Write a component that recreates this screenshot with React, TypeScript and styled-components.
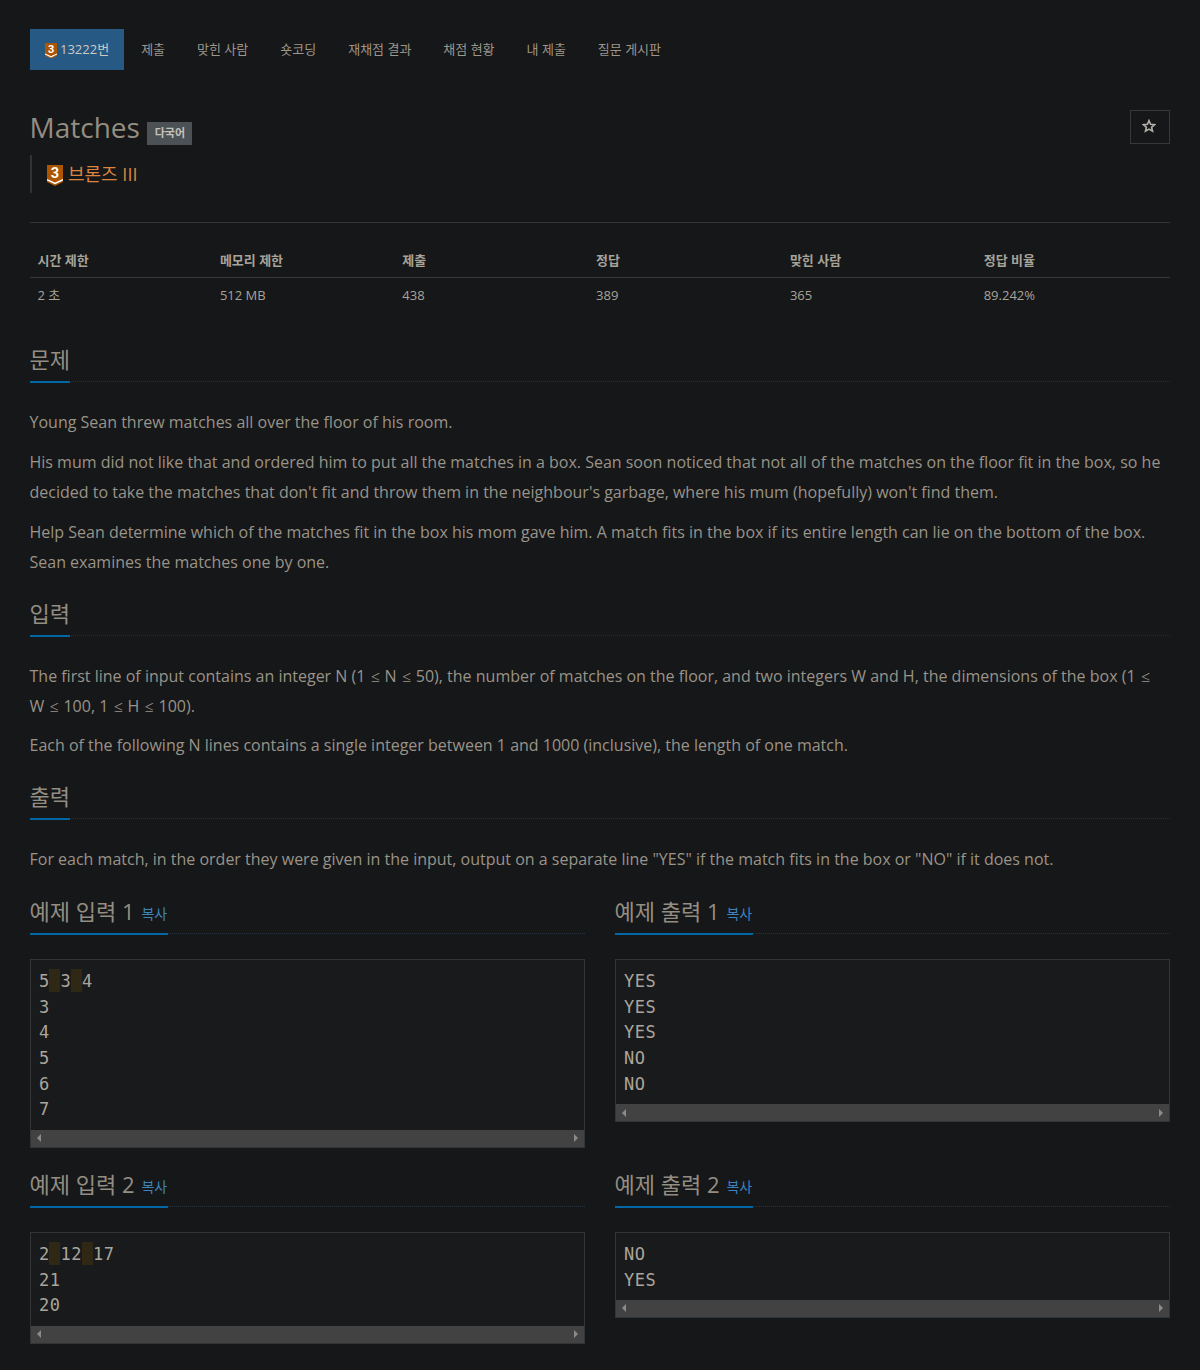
import React from "react";
import styled, { createGlobalStyle } from "styled-components";

const sans = `"Open Sans", "Noto Sans CJK KR", sans-serif`;
const mono = `"DejaVu Sans Mono", "Noto Sans CJK KR", monospace`;

const GlobalStyle = createGlobalStyle`
  * { box-sizing: border-box; }
  body {
    margin: 0;
    background: #151719;
    color: #a8a399;
    font-family: ${sans};
    font-size: 13px;
    line-height: 20px;
  }
`;

const Page = styled.main`
  padding: 29px 30.5px 0 29.5px;
  min-height: 1370px;
`;

const Nav = styled.nav`
  display: flex;
  gap: 2px;
  margin-left: 0.5px;
`;

const NavItem = styled.a<{ $active?: boolean }>`
  display: flex;
  align-items: center;
  gap: 3px;
  height: 41px;
  padding: 0 15px 2px;
  color: ${(p) => (p.$active ? "#cdc9c2" : "#9d968a")};
  background: ${(p) => (p.$active ? "#265a85" : "transparent")};
`;

const TitleRow = styled.header`
  display: flex;
  justify-content: space-between;
  align-items: flex-start;
  height: 45px;
  margin-top: 40px;
`;

const TitleGroup = styled.div`
  display: flex;
  align-items: flex-start;
  gap: 7.5px;
`;

const Title = styled.h1`
  margin: 0;
  font-size: 28px;
  line-height: 34px;
  font-weight: 400;
  color: #948d82;
`;

const Label = styled.span`
  margin-top: 12px;
  width: 45px;
  height: 23px;
  line-height: 22px;
  text-align: center;
  font-size: 11px;
  font-weight: 600;
  color: #c6c2bb;
  background: #4b5155;
`;

const StarButton = styled.button`
  display: flex;
  align-items: center;
  justify-content: center;
  width: 40px;
  height: 34px;
  padding: 0 2px 2px 0;
  border: 1px solid #35393b;
  background: transparent;
  color: #b5b0a8;
`;

const Tier = styled.blockquote`
  display: flex;
  align-items: center;
  gap: 5.5px;
  height: 38px;
  margin: 0;
  padding-left: 15px;
  border-left: 2px solid #2f3335;
  font-size: 18px;
  color: #dc8540;
`;

const Badge = styled.svg<{ $w: number; $drop: number }>`
  flex: none;
  width: ${(p) => p.$w}px;
  height: ${(p) => (p.$w * 21) / 16}px;
  margin-top: ${(p) => p.$drop}px;
`;

const Rule = styled.hr`
  margin: 29px 0 19px;
  border: 0;
  border-top: 1px solid #313537;
`;

const InfoTable = styled.table`
  width: 100%;
  table-layout: fixed;
  border-collapse: collapse;
`;

const Th = styled.th<{ $w: number }>`
  width: ${(p) => p.$w}%;
  height: 35px;
  padding: 1px 8px 0;
  text-align: left;
  font-weight: 700;
  border-bottom: 1px solid #35393b;
`;

const Td = styled.td`
  height: 35px;
  padding: 0 8px;
`;

const Headline = styled.div<{ $gap: number; $tint?: boolean; $after?: number }>`
  display: flex;
  height: 38px;
  margin: ${(p) => p.$gap}px 0 ${(p) => p.$after ?? 26}px;
  border-bottom: 1px dotted ${(p) => (p.$tint ? "#253040" : "#2a2e30")};
`;

const Heading = styled.h2`
  display: flex;
  align-items: flex-start;
  gap: 7px;
  height: 39px;
  margin: 0;
  border-bottom: 2px solid #0067a6;
  font-size: 22px;
  line-height: 31px;
  font-weight: 400;
  color: #948d82;
`;

const CopyLink = styled.a`
  margin-top: 2px;
  padding-right: 0.5px;
  font-size: 14px;
  color: #3d83bc;
`;

const Paragraph = styled.p`
  margin: 0 0 10px;
  font-size: 16px;
  line-height: 29.8px;
  color: #9a9388;
`;

const Symbol = styled.span`
  padding: 0 0.7px 0 1.4px;
  font-family: "Liberation Serif", serif;
  line-height: 1;
`;

const Samples = styled.div`
  display: grid;
  grid-template-columns: 555px 555px;
  column-gap: 30px;
  row-gap: 10px;
  align-items: start;
`;

const CodeBox = styled.div`
  border: 1px solid #313537;
  background: #181a1b;
`;

const Code = styled.pre`
  margin: 0;
  padding: 8px 8px 7.7px;
  font-family: ${mono};
  font-size: 17px;
  letter-spacing: 0.57px;
  line-height: 25.71px;
  color: #aba59b;
`;

const CodeLine = styled.div`
  display: flex;
  height: 25.71px;
`;

const Word = styled.span`
  padding-top: 1px;
  margin: 0 -0.4px 0 0.4px;
`;

const Space = styled.span`
  width: 10.8px;
  height: 23px;
  margin-top: 1px;
  background: #2e2815;
`;

const ScrollTrack = styled.div`
  display: flex;
  align-items: center;
  justify-content: space-between;
  height: 17px;
  padding: 0 6px;
  background: #424242;
`;

const Arrow = styled.span<{ $right?: boolean }>`
  border: 4px solid transparent;
  border-left: ${(p) => (p.$right ? "4px solid #8b8b8b" : "0")};
  border-right: ${(p) => (p.$right ? "0" : "4px solid #8b8b8b")};
`;

function TierIcon({ width, drop }: { width: number; drop: number }) {
  return (
    <Badge $w={width} $drop={drop} viewBox="0 0 16 21">
      <path d="M0 0H16V17L8 21L0 17Z" fill="#ad5600" />
      <path d="M0 14.6L8 18.4L16 14.6" fill="none" stroke="#fff" strokeWidth="1.5" />
      <text x="8" y="13" textAnchor="middle" fill="#fff" fontFamily="Roboto" fontWeight="700" fontSize="14.5">3</text>
    </Badge>
  );
}

function Le() {
  return <Symbol>≤</Symbol>;
}

function Section({ title, gap, children }: { title: string; gap: number; children: React.ReactNode }) {
  return (
    <section>
      <Headline $gap={gap}><Heading>{title}</Heading></Headline>
      {children}
    </section>
  );
}

function Sample({ title, text }: { title: string; text: string }) {
  return (
    <section>
      <Headline $gap={11} $after={25} $tint><Heading>{title}<CopyLink>복사</CopyLink></Heading></Headline>
      <CodeBox>
        <Code>
          {text.split("\n").map((line, i) => (
            <CodeLine key={i}>
              {line.split(" ").map((word, j) => (
                <React.Fragment key={j}>
                  {j > 0 && <Space> </Space>}
                  <Word>{word}</Word>
                </React.Fragment>
              ))}
            </CodeLine>
          ))}
        </Code>
        <ScrollTrack><Arrow /><Arrow $right /></ScrollTrack>
      </CodeBox>
    </section>
  );
}

const links = ["제출", "맞힌 사람", "숏코딩", "재채점 결과", "채점 현황", "내 제출", "질문 게시판"];
const info: [string, string, number][] = [
  ["시간 제한", "2 초", 16],
  ["메모리 제한", "512 MB", 16],
  ["제출", "438", 17],
  ["정답", "389", 17],
  ["맞힌 사람", "365", 17],
  ["정답 비율", "89.242%", 17],
];

export default function App() {
  return (
    <Page>
      <GlobalStyle />
      <Nav>
        <NavItem $active><TierIcon width={12} drop={4} />13222번</NavItem>
        {links.map((l) => <NavItem key={l}>{l}</NavItem>)}
      </Nav>
      <TitleRow>
        <TitleGroup>
          <Title>Matches</Title>
          <Label>다국어</Label>
        </TitleGroup>
        <StarButton aria-label="star">
          <svg width="14" height="14" viewBox="0 0 14 14">
            <path d="M7 1.6L8.6 5.2L12.6 5.6L9.6 8.3L10.5 12.2L7 10.1L3.5 12.2L4.4 8.3L1.4 5.6L5.4 5.2Z" fill="none" stroke="currentColor" strokeWidth="1.6" />
          </svg>
        </StarButton>
      </TitleRow>
      <Tier><TierIcon width={16} drop={2} />브론즈 III</Tier>
      <Rule />
      <InfoTable>
        <thead><tr>{info.map(([h, , w]) => <Th key={h} $w={w}>{h}</Th>)}</tr></thead>
        <tbody><tr>{info.map(([h, v]) => <Td key={h}>{v}</Td>)}</tr></tbody>
      </InfoTable>
      <Section title="문제" gap={32.4}>
        <Paragraph>Young Sean threw matches all over the floor of his room.</Paragraph>
        <Paragraph>His mum did not like that and ordered him to put all the matches in a box. Sean soon noticed that not all of the matches on the floor fit in the box, so he decided to take the matches that don't fit and throw them in the neighbour's garbage, where his mum (hopefully) won't find them.</Paragraph>
        <Paragraph>Help Sean determine which of the matches fit in the box his mom gave him. A match fits in the box if its entire length can lie on the bottom of the box. Sean examines the matches one by one.</Paragraph>
      </Section>
      <Section title="입력" gap={20.35}>
        <Paragraph>
          The first line of input contains an integer N (1 <Le /> N <Le /> 50), the number of matches on the floor, and two integers W and H, the dimensions of the box (1 <Le /><br />
          W <Le /> 100, 1 <Le /> H <Le /> 100).
        </Paragraph>
        <Paragraph>Each of the following N lines contains a single integer between 1 and 1000 (inclusive), the length of one match.</Paragraph>
      </Section>
      <Section title="출력" gap={20}>
        <Paragraph>For each match, in the order they were given in the input, output on a separate line "YES" if the match fits in the box or "NO" if it does not.</Paragraph>
      </Section>
      <Samples>
        <Sample title="예제 입력 1" text={"5 3 4\n3\n4\n5\n6\n7"} />
        <Sample title="예제 출력 1" text={"YES\nYES\nYES\nNO\nNO"} />
        <Sample title="예제 입력 2" text={"2 12 17\n21\n20"} />
        <Sample title="예제 출력 2" text={"NO\nYES"} />
      </Samples>
    </Page>
  );
}
